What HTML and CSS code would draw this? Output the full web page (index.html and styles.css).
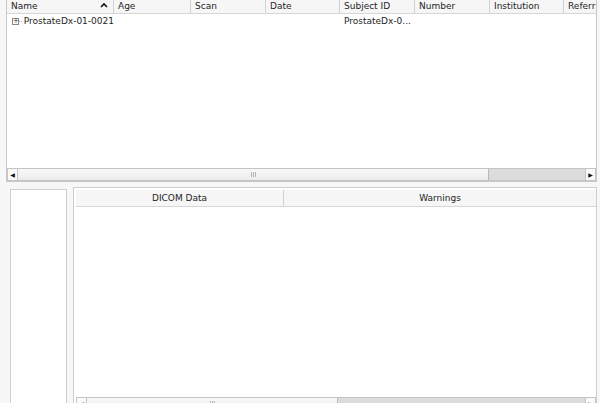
FILE: index.html
```html
<html>
  <head>
    <link rel="stylesheet" href="styles.css">
    <title>DICOM Browser</title>
  </head>
  <body>
    <div class="window">
      <div class="tree-panel">
        <div class="header">
          <div class="col col-name">Name<svg class="sort" width="8" height="6" viewBox="0 0 8 6"><path d="M1 5 L4 2 L7 5" fill="none" stroke="#111" stroke-width="1.6"/></svg></div>
          <div class="col w77">Age</div>
          <div class="col w75">Scan</div>
          <div class="col w74">Date</div>
          <div class="col w75">Subject ID</div>
          <div class="col w75">Number</div>
          <div class="col w74">Institution</div>
          <div class="col last">Referr</div>
        </div>
        <div class="rows">
          <div class="row">
            <div class="cell cell-name"><span class="expander">+</span><span class="dots"></span>ProstateDx-01-0021</div>
            <div class="cell w77"></div>
            <div class="cell w75"></div>
            <div class="cell w74"></div>
            <div class="cell w75">ProstateDx-0...</div>
          </div>
        </div>
        <div class="hscroll">
          <div class="arrow">&#9664;</div>
          <div class="track">
            <div class="thumb" style="width: 470px;"><span class="grip"></span></div>
          </div>
          <div class="arrow">&#9654;</div>
        </div>
      </div>

      <div class="bottom">
        <div class="side-list"></div>
        <div class="data-panel">
          <div class="header data-header">
            <div class="col dcol">DICOM Data</div>
            <div class="col dcol last">Warnings</div>
          </div>
          <div class="data-body"></div>
          <div class="hscroll">
            <div class="arrow">&#9664;</div>
            <div class="track">
              <div class="thumb" style="width: 250px;"><span class="grip"></span></div>
            </div>
            <div class="arrow">&#9654;</div>
          </div>
        </div>
      </div>
    </div>
  </body>
</html>
```

FILE: styles.css
```css
body{
  margin: 0;
  background: #f7f7f7;
  font-family: "DejaVu Sans", sans-serif;
  font-size: 9px;
  color: #1e1e1e;
}
.window{
  width: 600px;
  height: 403px;
  overflow: hidden;
  display: flex;
  flex-direction: column;
}
.tree-panel{
  margin-left: 6px;
  width: 589px;
  height: 181px;
  flex-shrink: 0;
  background: #fff;
  border: 1px solid #c9c9c9;
  border-top: none;
  display: flex;
  flex-direction: column;
}
.header{
  display: flex;
  height: 13px;
  background: #f6f6f6;
  border-bottom: 1px solid #d6d6d6;
  flex-shrink: 0;
}
.col{
  box-sizing: border-box;
  height: 13px;
  line-height: 13px;
  padding-left: 4px;
  border-right: 1px solid #d2d2d2;
  white-space: nowrap;
  overflow: hidden;
}
.col-name{
  width: 107px;
  display: flex;
  justify-content: space-between;
  align-items: center;
}
.sort{
  margin-right: 5px;
  margin-top: -3px;
}
.w77{ width: 77px; }
.w75{ width: 75px; }
.w74{ width: 74px; }
.col.last{
  flex: 1;
  border-right: none;
}
.rows{
  flex: 1;
  padding-top: 1px;
}
.row{
  display: flex;
  height: 13px;
  line-height: 13px;
}
.cell{
  box-sizing: border-box;
  padding-left: 4px;
  white-space: nowrap;
}
.cell-name{
  width: 107px;
  display: flex;
  align-items: center;
}
.expander{
  display: inline-block;
  box-sizing: border-box;
  width: 7px;
  height: 7px;
  border: 1px solid #8a8a8a;
  font-size: 7px;
  line-height: 5px;
  text-align: center;
  color: #333;
  margin-left: 1px;
}
.dots{
  display: inline-block;
  width: 4px;
  border-top: 1px dotted #aaa;
  margin-right: 2px;
}
.hscroll{
  display: flex;
  height: 11px;
  border-top: 1px solid #c4c4c4;
  border-bottom: 1px solid #c4c4c4;
  background: #dcdcdc;
  flex-shrink: 0;
}
.arrow{
  width: 9px;
  background: #fafafa;
  border-left: 1px solid #c4c4c4;
  border-right: 1px solid #c4c4c4;
  font-size: 6px;
  line-height: 11px;
  text-align: center;
  color: #111;
}
.track{
  flex: 1;
  display: flex;
}
.thumb{
  background: linear-gradient(#f8f8f8, #ececec);
  border-right: 1px solid #b8b8b8;
  display: flex;
  justify-content: center;
  align-items: center;
}
.grip{
  width: 1px;
  height: 5px;
  background: #b4b4b4;
  box-shadow: 2px 0 0 #b4b4b4, 4px 0 0 #b4b4b4;
  margin-right: 4px;
}
.bottom{
  display: flex;
  margin-top: 5px;
  gap: 6px;
  flex-shrink: 0;
}
.side-list{
  margin-left: 10px;
  margin-top: 2px;
  width: 55px;
  height: 240px;
  background: #fff;
  border: 1px solid #cfcfcf;
}
.data-panel{
  box-sizing: border-box;
  width: 524px;
  height: 224px;
  background: #fff;
  border: 1px solid #cfcfcf;
  display: flex;
  flex-direction: column;
  padding: 2px 0 0 2px;
}
.data-header{
  height: 16px;
}
.data-header .col{
  height: 16px;
  line-height: 16px;
  text-align: center;
  padding: 0;
}
.dcol{
  width: 208px;
}
.data-body{
  flex: 1;
}
```
